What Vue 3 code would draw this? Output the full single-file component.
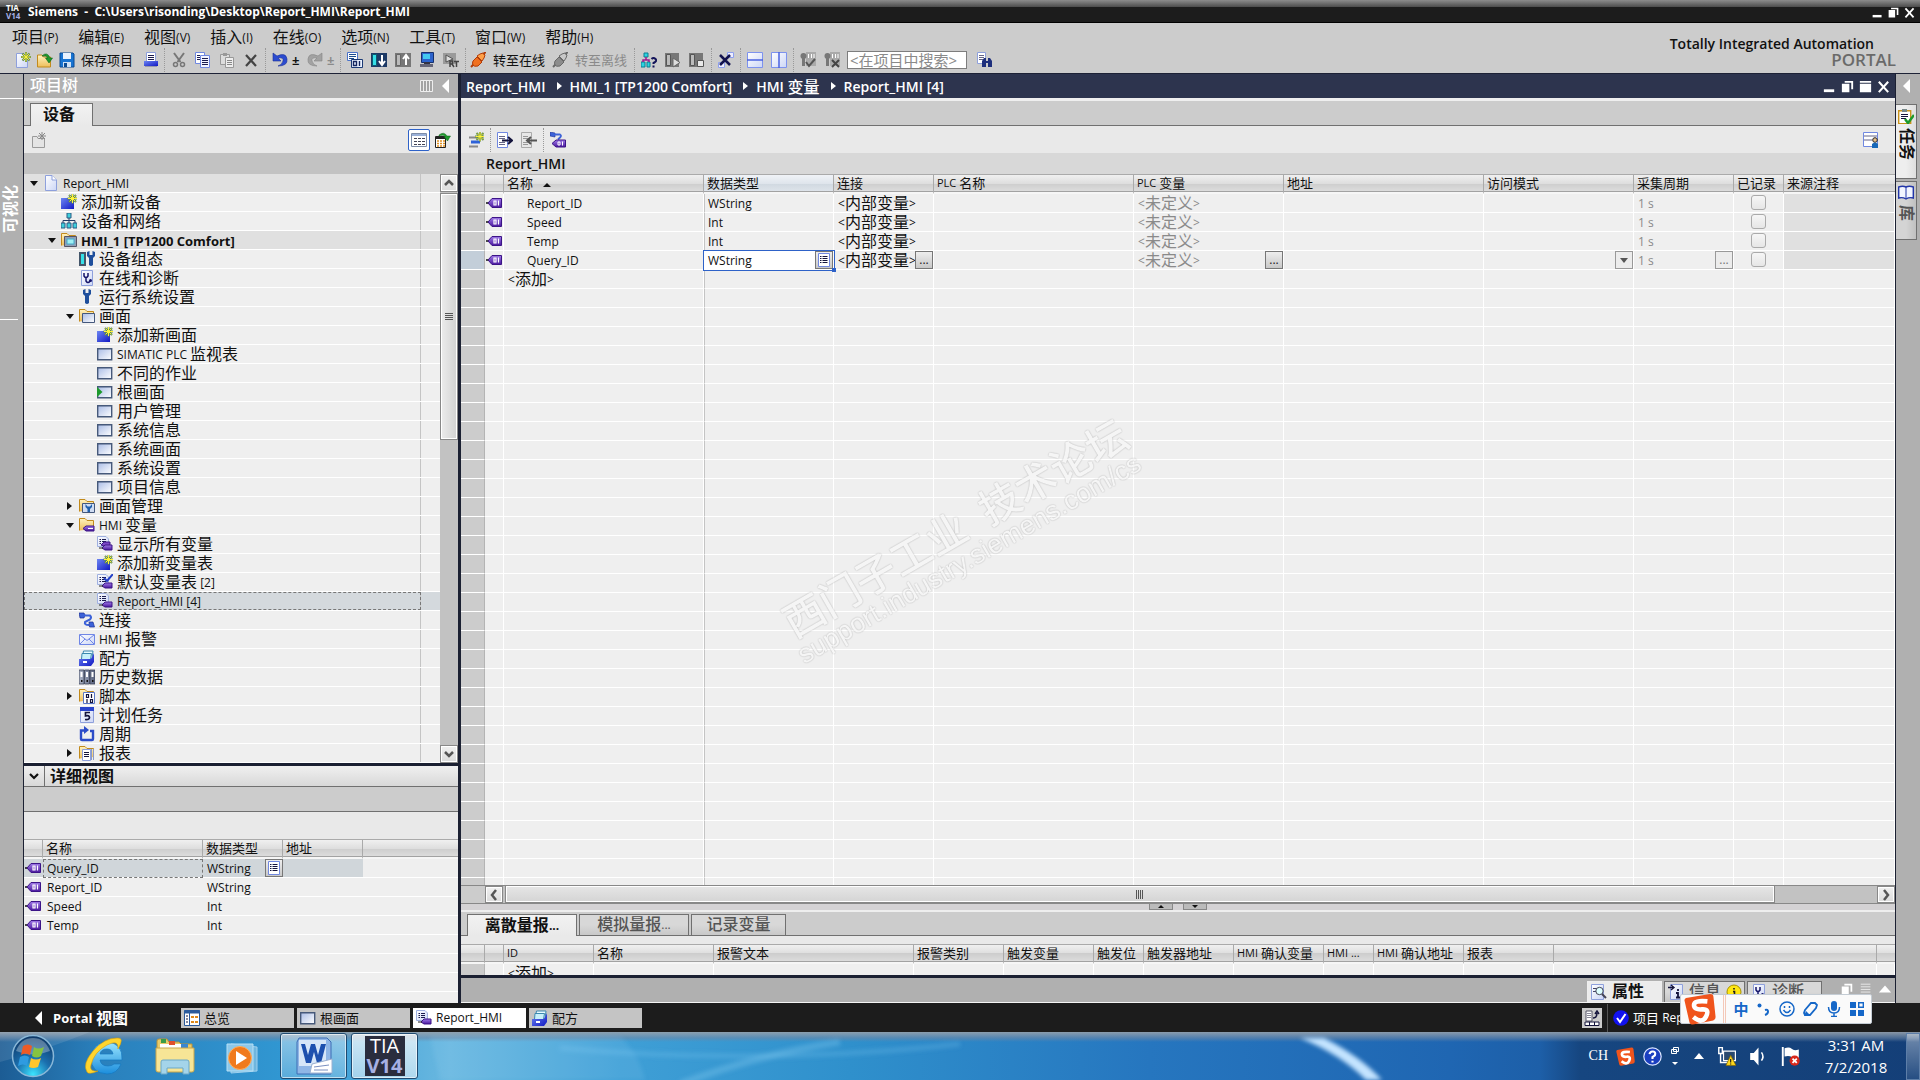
<script setup>
import { h } from 'vue'

/* Splits a label into Latin and Chinese runs so each keeps its own type size. */
const Txt = (props) =>
  h('span', { class: 'txt' },
    props.t.split(/([\u3400-\u9fff]+)/).filter(Boolean).map((run) =>
      /[\u3400-\u9fff]/.test(run) ? h('span', { class: 'zh' }, run) : run))
Txt.props = ['t']

const star = (x, y) =>
  `<g transform="translate(${x} ${y})" stroke-linecap="square"><path d="M0-4V4M-4 0H4M-2.8-2.8L2.8 2.8M-2.8 2.8L2.8-2.8" stroke="#5d8a4a" stroke-width="2"/><path d="M0-4V4M-4 0H4M-2.5-2.5L2.5 2.5M-2.5 2.5L2.5-2.5" stroke="#fff23a" stroke-width="1"/></g>`
const greyStar = (x, y) =>
  `<path transform="translate(${x} ${y})" d="M0-4V4M-4 0H4M-3-3L3 3M-3 3L3-3" stroke="#888" stroke-width="1"/>`
const folder = `<path d="M.5 13.5V1.500H6L8 3.500H14.500V12" fill="url(#gFolder)" stroke="#c28a1c"/>`
const miniTag = `<path d="M5 12l3-3h7v5H8z" fill="url(#gTag)" stroke="#3c1487"/><path d="M2 12h4" stroke="#222"/>`
const listPage = `<path d="M.5.500H9L11.500 3V10.500H.500z" fill="url(#gPage)" stroke="#9fb0e0"/><path d="M2.500 3.500h1.500M5 3.500h4M2.500 5.500h1.500M5 5.500h4M2.500 7.500h1.500M5 7.500h4" stroke="#1b1b4d"/>`
const wrench = (x, c) => `<path transform="translate(${x} 0)" d="M0 1v4l2 2v7q2 2 4 0V7l2-2V1L5.500 0v4h-3V0z" fill="${c}"/>`
const plug = (a, b, c) => `<path d="M1 15l3-3" stroke="${b}" stroke-width="2"/><path d="M3 9l4-4 5 5-4 4q-4 1-5-1t0-4z" fill="${a}" stroke="${b}"/><path d="M7 4l3-2 3-1 2 2-1 3-2 3z" fill="${c}" stroke="${b}"/><path d="M13 2l3-2" stroke="${b}" stroke-width="2"/>`

const icons = {
  newProject: `<path d="M1.500 1.500H9L12.500 5V15.500H1.500z" fill="url(#gPage)" stroke="#8ea0dc"/>${star(11, 5)}`,
  open: `<path d="M.5 15V3H5l1.500 2H13.500V15z" fill="url(#gFolder)" stroke="#c28a1c"/><path d="M5 4q5-5 8 2h2.500L12 11 8.500 6H11Q9 3 5 4z" fill="#1d9a2c" stroke="#0c6418" stroke-width=".6"/>`,
  save: `<path d="M1 1H14L15 2V15H1z" fill="#1874d2" stroke="#0b4b94"/><path d="M4 1h8v6H4z" fill="#e8f2ff"/><path d="M4 10h8v5H4z" fill="#cfe1f5"/><path d="M5 11h3v4H5z" fill="#0b4b94"/>`,
  print: `<path d="M3.500.500h9v9h-9z" fill="#fff" stroke="#8ea0dc"/><path d="M5 3.500h6M5 5.500h6M5 7.500h6" stroke="#1b1b4d"/><path d="M1 9h14v5H1z" fill="url(#gBlue)"/><path d="M2 14.500h12" stroke="#99a"/>`,
  cut: `<path d="M3 1l6.500 9M13 1L6.500 10" stroke="#777" stroke-width="2" fill="none"/><circle cx="4.500" cy="12.500" r="2" fill="none" stroke="#777" stroke-width="1.500"/><circle cx="11.500" cy="12.500" r="2" fill="none" stroke="#777" stroke-width="1.500"/>`,
  copy: `<path d="M.5.500h9v11h-9z" fill="#fff" stroke="#7088e0"/><path d="M2 3.500h3M2 5.500h3M2 7.500h3" stroke="#1b1b4d"/><path d="M5.500 3.500h9v12h-9z" fill="#f2f4ff" stroke="#7088e0"/><path d="M7 6.500h6M7 8.500h6M7 10.500h6M7 12.500h6" stroke="#1b1b4d"/>`,
  paste: `<path d="M1.500 2.500h9v10h-9z" fill="#ddd" stroke="#999"/><path d="M4 1h4v3H4z" fill="#999"/><path d="M6.500 5.500h8v10h-8z" fill="#eee" stroke="#999"/><path d="M8 8.500h5M8 10.500h5M8 12.500h5" stroke="#888"/>`,
  del: `<path d="M3 3l10 11M13 3L3 14" stroke="#444" stroke-width="2.200"/>`,
  undo: `<path d="M1 1v8h8L6 6q6-1 5 3t-5 5q10 0 9-7T5 4z" fill="#2b4bd0" stroke="#1a2f96" stroke-width=".6"/>`,
  redo: `<path d="M15 1v8H7l3-3Q4 5 5 9t5 5Q0 14 1 7t10-3z" fill="#a2a2a2" stroke="#858585" stroke-width=".6"/>`,
  compile: `<path d="M.5.500h10v8h-10z" fill="#fff" stroke="#4a72c8"/><path d="M2 2.500h7M2 4.500h7M2 6.500h5" stroke="#1b4b8d"/><path d="M4.500 7.500h11v8h-11z" fill="#eaf2ff" stroke="#1c3a74"/><path d="M6.500 9.500h3v4h-3zM12.500 9v5" stroke="#15265e" stroke-width="1.400" fill="none"/>`,
  download: `<path d="M0 1h16v14H0z" fill="#1d3a66"/><path d="M1.500 2.500h4v11h-4z" fill="#35e0e8" stroke="#0b5a70"/><path d="M11 3v9M8 9l3 4 3-4" stroke="#fff" stroke-width="2" fill="none"/>`,
  upload: `<path d="M0 1h16v14H0z" fill="#777"/><path d="M1.500 2.500h4v11h-4z" fill="#bbb" stroke="#666"/><path d="M11 13V4M8 7l3-4 3 4" stroke="#fff" stroke-width="2" fill="none"/>`,
  pc: `<path d="M2.500.500h12v10h-12z" fill="#2c63cc" stroke="#16316e"/><path d="M4 2h7v5H4z" fill="#43c9f0"/><path d="M1 12h13v3H1z" fill="#667"/><path d="M5 10h6v2H5z" fill="#334"/>`,
  rt: `<path d="M0 1h13v11H0z" fill="#9a9a9a"/><path d="M3 3l7 4-7 3z" fill="#ddd" stroke="#555"/><path d="M7 15V9h2.500v3H7M9 12l2 3M11 9.500h5M13.500 9v6" stroke="#444" stroke-width="1.500" fill="none"/>`,
  online: plug('#f07020', '#b23c08', '#ffa048'),
  offline: plug('#8c8c8c', '#686868', '#c8c8c8'),
  access: `<path d="M3 1h4v4H3zM0 10h4v5H0zM6 10h3v5H6z" fill="#2dd5e0" stroke="#0d7c92"/><path d="M5 5v3M2 10V8h6v2" stroke="#a01890" stroke-width="1.500" fill="none"/><path d="M10.500 7q2-2 4 0t-2 4v1M12.500 13.500v2" stroke="#14145a" stroke-width="2" fill="none"/>`,
  start: `<path d="M0 1h14v14H0z" fill="#777"/><path d="M1.500 2.500h4v11h-4z" fill="#bbb" stroke="#555"/><path d="M8 6l7 4.500L8 15z" fill="#ddd" stroke="#666"/>`,
  stop: `<path d="M0 1h14v14H0z" fill="#777"/><path d="M1.500 2.500h4v11h-4z" fill="#bbb" stroke="#555"/><path d="M8.500 8.500h6v6h-6z" fill="#e8e8e8" stroke="#555"/>`,
  cross: `<path d="M9.500.500h6v5h-6zM.5 10.500h6v5h-6z" fill="#eef" stroke="#8ea0ee"/><path d="M2 3l10 10M12 3L2 13" stroke="#12124e" stroke-width="2.500"/>`,
  splitH: `<path d="M.5.500h15v15H.500z" fill="url(#gPage)" stroke="#7d92ee"/><path d="M0 8h16" stroke="#4a62e0" stroke-width="1.500"/>`,
  splitV: `<path d="M.5.500h15v15H.500z" fill="url(#gPage)" stroke="#7d92ee"/><path d="M8 0v16" stroke="#4a62e0" stroke-width="1.500"/>`,
  refOk: `<path d="M6 0h10v14H6z" fill="#aaa"/><circle cx="3.500" cy="4" r="3" fill="#777"/><path d="M2 6h3v8H2z" fill="#777"/><path d="M8.500 2v4M11.500 2v4M14 2v4" stroke="#fff"/><path d="M6 10l3 4 6-7" stroke="#555" stroke-width="2" fill="none"/>`,
  refNo: `<path d="M6 0h10v14H6z" fill="#aaa"/><circle cx="3.500" cy="4" r="3" fill="#777"/><path d="M2 6h3v8H2z" fill="#777"/><path d="M8.500 2v4M11.500 2v4M14 2v4" stroke="#fff"/><path d="M8 8l7 7M15 8l-7 7" stroke="#444" stroke-width="2"/>`,
  find: `<path d="M.5.500h8v11h-8z" fill="#fff" stroke="#8ea0dc"/><path d="M2 3.500h5M2 5.500h5M2 7.500h5" stroke="#668"/><path d="M5 15V9l2-3h2v3h2V6h2l2 3v6h-4v-4H9v4z" fill="#1e2f7c"/>`,
  panel: `<path d="M1.500 2.500h12v11h-12z" fill="#a4a4a4" stroke="#eee"/><path d="M4.500 3v10M7.500 3v10M10.500 3v10" stroke="#eee"/>`,
  addGrey: `<path d="M1.500 4.500H6l1 2H13.500V15.500H1.500z" fill="#e4e4e4" stroke="#9a9a9a"/>${greyStar(11, 4)}`,
  grid: `<path d="M.5 1.500h15v13H.500z" fill="#fff" stroke="#7c8ca8"/><path d="M1 3h14" stroke="#9ab0d8" stroke-width="2"/><path d="M3 6.500h3M7 6.500h3M11 6.500h3M3 9.500h3M7 9.500h3M11 9.500h3M3 12.500h3M7 12.500h3M11 12.500h3" stroke="#445"/>`,
  gridGo: `<path d="M.5 4.500h10v11H.500z" fill="#fff" stroke="#222"/><path d="M1 6h9" stroke="#222" stroke-width="2"/><path d="M2 9h8M2 11.500h8M2 14h8" stroke="#e09020" stroke-dasharray="2 1" stroke-width="1.500"/><path d="M4 3q5-4 8 1h3.500L12.500 9 9 4.500h1.500Q8 2.500 4 4z" fill="#1d9a2c" stroke="#0c6418" stroke-width=".5"/>`,
  page: `<path d="M2.500.500H9L13.500 5V15.500h-11z" fill="url(#gPage)" stroke="#8ea0dc"/><path d="M9 .5V5h4.500" fill="#fff" stroke="#8ea0dc"/>`,
  add: `<path d="M0 4h13v11H0z" fill="url(#gBlue)"/>${star(11.5, 4.5)}`,
  network: `<path d="M6 0h4v5H6zM0 10h4v5H0zM6 10h4v5H6zM12 10h4v5h-4z" fill="#3ed0dc" stroke="#2b5a84"/><path d="M8 5v5M2 10V7.500h12V10" stroke="#223c66" fill="none"/>`,
  device: `${folder}<path d="M3.500 4.500h12v10h-12z" fill="#8ca0b8" stroke="#556"/><path d="M6 7h7v5H6z" fill="#9ff0f4" stroke="#4ac"/>`,
  config: `<path d="M0 1h7v14H0z" fill="#44566a"/><path d="M2 3h3v10H2z" fill="#35e0e8"/>${wrench(8, '#1f4f9c')}`,
  diag: `<path d="M2.500.500h11v15h-11z" fill="url(#gPage)" stroke="#8ea0dc"/><path d="M5 3v3q2 3 4 0V3M7 8v3q2 3 4 0" stroke="#14146a" stroke-width="1.500" fill="none"/><circle cx="11.500" cy="10.500" r="1.500" fill="#14146a"/>`,
  wrench: wrench(4, '#1f4f9c'),
  screens: `${folder}<path d="M3.500 5.500h12v9h-12z" fill="url(#gScreen)" stroke="#44587c"/>`,
  screen: `<path d="M.7 2.700h14v11H.700z" fill="url(#gScreen)" stroke="#46597a" stroke-width="1.400"/>`,
  rootScreen: `<path d="M.7 2.700h14v11H.700z" fill="url(#gScreen)" stroke="#46597a" stroke-width="1.400"/><path d="M0 3l5.500 5L0 13z" fill="#1d9a2c"/>`,
  screenMgmt: `${folder}<path d="M3.500 5.500h12v9h-12z" fill="#cfdcf2" stroke="#44587c"/><path d="M6.500 6v3l2 2v3h2.500v-3l2-2V6L11 8.500H8.500z" fill="#1f5fac"/>`,
  tagFolder: `${folder}<path d="M4 11.500l3-2.500h8v5H7z" fill="url(#gTag)" stroke="#3c1487"/><path d="M9 11.500h5" stroke="#fff"/>`,
  tagsAll: `${listPage}<path d="M4 9l3-3h6v4H7z" fill="#7c48c8" stroke="#3c1487"/>${miniTag}`,
  tagsDefault: `${listPage}<path d="M7 4l3 3 6-7" stroke="#2340c8" stroke-width="2" fill="none"/>${miniTag}`,
  tagTable: `${listPage}${miniTag}`,
  connection: `<path d="M0 1h5l1 2-1 3H1z" fill="#3c62d8" stroke="#1b2f96" stroke-width=".7"/><path d="M5 3.500h6q2 2 0 4L6 10q-1 3 4 3" stroke="#3c62d8" stroke-width="2" fill="none"/><path d="M10 10h4l1.500 5h-5z" fill="#3c62d8" stroke="#1b2f96" stroke-width=".7"/>`,
  mail: `<path d="M.5 3.500h15v10H.500z" fill="url(#gPage)" stroke="#6f86e6"/><path d="M1 4l7 5.500L15 4M1 13l5-5M15 13l-5-5" stroke="#6f86e6" fill="none"/>`,
  recipe: `<path d="M4.500 1H14l-1 8H3z" fill="#e8fbff" stroke="#3c88b0"/><path d="M3 3.500h9.500l-1 6h-9z" fill="#c8f0fa" stroke="#3c88b0"/><path d="M0 9h12l3-6v9l-3 4H0z" fill="url(#gBlue)"/><path d="M4 11h4v2H4z" fill="#fff"/>`,
  archive: `<path d="M0 1h5v14H0zM5.500 1h5v14h-5zM11 1h5v14h-5z" fill="url(#gBinder)" stroke="#3a4258" stroke-width=".8"/><path d="M1.500 3h2v5h-2zM7 3h2v5H7zM12.500 3h2v5h-2z" fill="#fff"/><path d="M2 11h1.500v2H2zM7.500 11H9v2H7.500zM13 11h1.500v2H13z" fill="#111"/>`,
  script: `${folder}<path d="M4.500 4.500h11v11h-11z" fill="#fff" stroke="#5a78c8"/><path d="M7.500 6.500h2v3h-2zM12.500 6v4M8 11v4M11.500 11.500h2v3h-2z" stroke="#14143c" fill="none" stroke-width="1.200"/>`,
  schedule: `<path d="M1.500.500h13v15h-13z" fill="url(#gPage)" stroke="#8ea0dc"/><path d="M1 0h14v4H1z" fill="#2a44cc"/><path d="M11 5.500H6.500v3.500q4-1 4 1.500t-4.500 2" stroke="#14143c" stroke-width="1.700" fill="none"/>`,
  cycle: `<path d="M5 4.500H2V13q0 1 1 1h10q1 0 1-1V5h-3" stroke="#2c4cc8" stroke-width="2.400" fill="none"/><path d="M5 0l5 4-5 4z" fill="#2c4cc8"/>`,
  report: `${folder}<path d="M3.500 4.500h8v11h-8z" fill="#fff" stroke="#8ea0dc"/><path d="M5 7.500h5M5 9.500h5M5 11.500h5" stroke="#14143c"/><path d="M12.500 4v11M14.500 4v11" stroke="#8a9ac8"/>`,
  tag: `<path d="M0 8h4" stroke="#111" stroke-width="1.500"/><path d="M2 8l4-4.500h9.500v9H6z" fill="url(#gTag)" stroke="#3c1487"/><path d="M8 6h2v4H8zM12.500 5.500v5" stroke="#fff" fill="none" stroke-width="1.200"/>`,
  list: `<path d="M2.500 1.500h11v13h-11z" fill="#fff" stroke="#7088e0"/><path d="M4 4.500h1.500M6.500 4.500h5M4 6.500h1.500M6.500 6.500h5M4 8.500h1.500M6.500 8.500h5M4 10.500h1.500M6.500 10.500h5" stroke="#14143c"/>`,
  addRow: `<path d="M1 5.500h9M1 14.500h9" stroke="#888" stroke-width="2"/><path d="M3 10h9" stroke="#2e62d8" stroke-width="3"/>${star(12, 4.5)}`,
  exportIcon: `<path d="M.5.500h10v15H.500z" fill="#fff" stroke="#7088e0"/><path d="M2 4.500h6M2 6.500h6M2 10.500h6M2 12.500h6" stroke="#668"/><path d="M5 8.500h9M11 5l4 3.500-4 3.500" stroke="#14143c" stroke-width="2" fill="none"/>`,
  importIcon: `<path d="M.5.500h10v15H.500z" fill="#e8e8e8" stroke="#aaa"/><path d="M2 4.500h5M2 6.500h5M2 10.500h5M2 12.500h5" stroke="#999"/><path d="M7 8.500h9M10 5L6 8.500l4 3.500" stroke="#555" stroke-width="2" fill="none"/>`,
  connTag: `<path d="M0 0l5 1v4L0 4z" fill="#3c62d8" stroke="#1b2f96" stroke-width=".6"/><path d="M4 2.500h6q2 1 0 3L8 7.500" stroke="#3c62d8" stroke-width="1.800" fill="none"/><path d="M2 11.500l4-3.500h9.500v7H6z" fill="url(#gTag)" stroke="#3c1487"/><path d="M8 10h2v3H8zM12.500 9.500v4" stroke="#fff" fill="none"/>`,
  person: `<path d="M.5.500h14v14H.500z" fill="#fff" stroke="#7088e0"/><path d="M1 4h13M1 8h8" stroke="#668"/><circle cx="12" cy="8" r="2.300" fill="#e8c08a" stroke="#222"/><path d="M9 16v-4q3-3 6 0v4z" fill="#1768b8"/>`,
  clipboard: `<path d="M.7 2.700h12v13H.700z" fill="#fff" stroke="#c8931c" stroke-width="1.400"/><path d="M4 1h5v3H4z" fill="#788"/><path d="M3 6.500h7M3 8.500h7M3 10.500h5" stroke="#14143c"/><path d="M7 11l3 4 6-8" stroke="#1d9a2c" stroke-width="2.500" fill="none"/>`,
  book: `<path d="M.7 2q4-1.500 7.300 0 3.300-1.500 7.300 0v11q-4-1-7.300 1-3.300-2-7.300-1z" fill="#f2f5ff" stroke="#2236a8" stroke-width="1.400"/><path d="M8 2v12" stroke="#2236a8"/>`,
  overview: `<path d="M.5.500h15v15H.500z" fill="#fff" stroke="#2a5a9c"/><path d="M0 2h16" stroke="#2a5a9c" stroke-width="3"/><path d="M5.500 3v12" stroke="#2a5a9c"/><path d="M2 6h2M2 9h2M2 12h2" stroke="#14143c"/><path d="M7 7h3M11 7h3M7 12h3M11 12h3" stroke="#e08a1c" stroke-width="2"/>`,
  search: `<path d="M.5.500h12v15H.500z" fill="url(#gPage)" stroke="#8ea0dc"/><path d="M2 4.500h4M2 7.500h3" stroke="#446"/><circle cx="8.500" cy="7" r="3.700" fill="#dff" stroke="#445"/><path d="M11 10l4 4" stroke="#445" stroke-width="2"/>`,
  info: `<path d="M2.500.500h12v15h-12z" fill="url(#gPage)" stroke="#8ea0dc"/><path d="M0 3.500h5M3 1l3 2.500L3 6" stroke="#14143c" stroke-width="1.400" fill="none"/><path d="M10 5v2M8 9h2v4M8 13.500h4" stroke="#14143c" stroke-width="1.800" fill="none"/>`,
  badge: `<circle cx="8" cy="8" r="7" fill="#ffe712" stroke="#a89200"/><path d="M8 4v1.500M7 7.500h1.500V12M6.500 12h4" stroke="#222" stroke-width="1.600" fill="none"/>`,
  sync: `<path d="M2 1h6v10H2z" fill="#fff" stroke="#556"/><path d="M3 3.500h4M3 5.500h4M3 7.500h4" stroke="#889"/><path d="M9 8q4 0 4-5M11 4l2-3 2 3" stroke="#14143c" stroke-width="1.500" fill="none"/><path d="M1 12h14v3.500H1z" fill="#fff" stroke="#14143c"/><path d="M5.500 12v3M10.500 12v3" stroke="#14143c"/>`,
  ok: `<circle cx="8" cy="8" r="7.800" fill="#1212f0"/><path d="M4 8l3 4 5.500-8" stroke="#fff" stroke-width="2" fill="none"/>`,
  sogou: `<path d="M1 2.500L13 .500q1.500 0 1.700 1.200L15.800 12q0 1.500-1.200 1.800L4.500 15.800q-1.500 0-1.800-1.300L.300 4Q0 3 1 2.500z" fill="#f0541c"/><path d="M11.700 4.200Q5 3.500 5 6t4 2.200 2 3.600-6.300.2" stroke="#fff" stroke-width="2.300" fill="none"/>`,
  help: `<circle cx="8" cy="8" r="7.300" fill="#1b3fc0" stroke="#dfe8ff"/><path d="M5.500 6q.5-2.500 3-2.200T10 7L8 8.500V10M8 11.500v1.500" stroke="#fff" stroke-width="1.800" fill="none"/>`,
  smile: `<circle cx="8" cy="8" r="7" fill="none" stroke="#1567c8" stroke-width="1.500"/><path d="M5.500 5v2M10.500 5v2M4.500 9q3.500 5 7 0" stroke="#1567c8" stroke-width="1.500" fill="none"/>`,
  pen: `<path d="M3 9l6-7h4l2 2-1 3-6 7H3l-1-2z" fill="none" stroke="#1567c8" stroke-width="1.800"/><path d="M2 15l2-5 3 3z" fill="#1567c8"/>`,
  mic: `<rect x="5" y="0" width="6" height="10" rx="3" fill="#1567c8"/><path d="M2.500 6q0 6 5.500 6t5.500-6M8 12v3.500M5 15.500h6" stroke="#1567c8" stroke-width="1.500" fill="none"/>`,
  apps: `<path d="M1 1h6v6H1zM1 9h6v6H1zM9 9h6v6H9z" fill="#1567c8"/><path d="M9.700 1.700h4.600v4.600H9.700z" fill="none" stroke="#1567c8" stroke-width="1.400"/>`,
  comma: `<circle cx="3.500" cy="4.500" r="2" fill="#1567c8"/><path d="M9 9q3-1 3 1.500T9 14" stroke="#1567c8" stroke-width="2" fill="none"/>`,
  net: `<path d="M5.500 3.500h10v8h-10z" fill="#2a4a70" stroke="#fff"/><path d="M1.500.500h3v5h-3zM3 6v7h6" stroke="#fff" fill="none" stroke-width="1.200"/><path d="M11.500 7l4.500 8.500H7.500z" fill="#ffd81c" stroke="#806400" stroke-width=".6"/><path d="M11.500 10v3M11.500 13.800v1" stroke="#222"/>`,
  sound: `<path d="M1 5h3l4-4.500v15L4 11H1z" fill="#fff"/><path d="M10.500 4.500q2.500 3.500 0 7" stroke="#fff" fill="none" stroke-width="1.300"/>`,
  flag: `<path d="M1.500 0v16" stroke="#fff" stroke-width="1.600"/><path d="M3 1q4-1.500 6 .5t6 .5v7q-4 1-6-.5T3 8z" fill="#fff"/><circle cx="11.500" cy="11.500" r="4.300" fill="#d8281c"/><path d="M9.700 9.700l3.600 3.600M13.300 9.700l-3.600 3.600" stroke="#fff" stroke-width="1.500"/>`,
  min: `<path d="M2 11h11v3H2z" fill="#fff"/>`,
  restore: `<path d="M5 2h9v9h-2V4H5zM2 5h8v9H2z" fill="#fff"/>`,
  max: `<path d="M2 2h12v2H2zM2 5h12v9H2z" fill="#fff"/>`,
  close: `<path d="M3 3l10 11M13 3L3 14" stroke="#fff" stroke-width="2.200"/>`,
  lines: `<path d="M2 2.500h11M2 5.500h11M2 8.500h11M2 11.500h11" stroke="#eee"/>`,
  triLeft: `<path d="M11 1v14L4 8z" fill="#fff"/>`,
  triUp: `<path d="M1 12L8 4l7 8z" fill="#fff"/>`,
}

const Ico = (props) =>
  h('svg', { class: 'ico', viewBox: '0 0 16 16', fill: 'none', 'aria-hidden': 'true', innerHTML: icons[props.n] })
Ico.props = ['n']

const menus = ['项目(P)', '编辑(E)', '视图(V)', '插入(I)', '在线(O)', '选项(N)', '工具(T)', '窗口(W)', '帮助(H)']

const tools = [
  { n: 'newProject', k: 'near' }, { n: 'open', k: 'near' }, { n: 'save', t: '保存项目', k: 'save' }, { n: 'print', k: 'near' }, { sep: 1 },
  { n: 'cut' }, { n: 'copy' }, { n: 'paste' }, { n: 'del' }, { sep: 1 },
  { n: 'undo' }, { pm: 1 }, { n: 'redo' }, { pm: 1, off: true }, { sep: 1 },
  { n: 'compile' }, { n: 'download' }, { n: 'upload' }, { n: 'pc' }, { n: 'rt' }, { sep: 1 },
  { n: 'online', t: '转至在线', k: 'link' }, { n: 'offline', t: '转至离线', k: 'link', off: true }, { sep: 1 },
  { n: 'access' }, { n: 'start' }, { n: 'stop' }, { sep: 1 },
  { n: 'cross' }, { sep: 1 }, { n: 'splitH' }, { n: 'splitV' }, { sep: 1 }, { n: 'refOk' }, { n: 'refNo' },
]

const tree = [
  { l: 0, i: 'page', t: 'Report_HMI', a: 'open', hl: true },
  { l: 1, i: 'add', t: '添加新设备' },
  { l: 1, i: 'network', t: '设备和网络' },
  { l: 1, i: 'device', t: 'HMI_1 [TP1200 Comfort]', a: 'open', hl: true, b: true },
  { l: 2, i: 'config', t: '设备组态' },
  { l: 2, i: 'diag', t: '在线和诊断' },
  { l: 2, i: 'wrench', t: '运行系统设置' },
  { l: 2, i: 'screens', t: '画面', a: 'open' },
  { l: 3, i: 'add', t: '添加新画面' },
  { l: 3, i: 'screen', t: 'SIMATIC PLC 监视表' },
  { l: 3, i: 'screen', t: '不同的作业' },
  { l: 3, i: 'rootScreen', t: '根画面' },
  { l: 3, i: 'screen', t: '用户管理' },
  { l: 3, i: 'screen', t: '系统信息' },
  { l: 3, i: 'screen', t: '系统画面' },
  { l: 3, i: 'screen', t: '系统设置' },
  { l: 3, i: 'screen', t: '项目信息' },
  { l: 2, i: 'screenMgmt', t: '画面管理', a: 'shut' },
  { l: 2, i: 'tagFolder', t: 'HMI 变量', a: 'open' },
  { l: 3, i: 'tagsAll', t: '显示所有变量' },
  { l: 3, i: 'add', t: '添加新变量表' },
  { l: 3, i: 'tagsDefault', t: '默认变量表 [2]' },
  { l: 3, i: 'tagTable', t: 'Report_HMI [4]', sel: true },
  { l: 2, i: 'connection', t: '连接' },
  { l: 2, i: 'mail', t: 'HMI 报警' },
  { l: 2, i: 'recipe', t: '配方' },
  { l: 2, i: 'archive', t: '历史数据' },
  { l: 2, i: 'script', t: '脚本', a: 'shut' },
  { l: 2, i: 'schedule', t: '计划任务' },
  { l: 2, i: 'cycle', t: '周期' },
  { l: 2, i: 'report', t: '报表', a: 'shut' },
]

const details = [
  { n: 'Query_ID', t: 'WString', sel: true },
  { n: 'Report_ID', t: 'WString' },
  { n: 'Speed', t: 'Int' },
  { n: 'Temp', t: 'Int' },
]

const crumbs = ['Report_HMI', 'HMI_1 [TP1200 Comfort]', 'HMI 变量', 'Report_HMI [4]']
const columns = ['名称', '数据类型', '连接', 'PLC 名称', 'PLC 变量', '地址', '访问模式', '采集周期', '已记录', '来源注释']
const columnWidths = [24, 19, 200, 130, 100, 200, 150, 200, 150, 100, 50, 0]
const tags = [
  { n: 'Report_ID', t: 'WString' },
  { n: 'Speed', t: 'Int' },
  { n: 'Temp', t: 'Int' },
  { n: 'Query_ID', t: 'WString', sel: true },
]
const alarmTabs = ['离散量报...', '模拟量报...', '记录变量']
const alarmColumns = ['', '', 'ID', '名称', '报警文本', '报警类别', '触发变量', '触发位', '触发器地址', 'HMI 确认变量', 'HMI ...', 'HMI 确认地址', '报表', '', '']
const alarmWidths = [24, 19, 90, 120, 200, 90, 90, 50, 90, 90, 50, 90, 90, 0, 18]
const editors = [
  { i: 'overview', t: '总览' },
  { i: 'screen', t: '根画面' },
  { i: 'tagTable', t: 'Report_HMI', on: true },
  { i: 'recipe', t: '配方' },
]
const px = (n) => (n ? { width: n + 'px' } : {})
</script>

<template>
  <div class="desktop">
    <svg class="defs" aria-hidden="true">
      <defs>
        <linearGradient id="gPage" x1="0" y1="0" x2="1" y2="1"><stop offset="0" stop-color="#fff" /><stop offset="1" stop-color="#ccd6f6" /></linearGradient>
        <linearGradient id="gFolder" x1="0" y1="0" x2="0" y2="1"><stop offset="0" stop-color="#fff3c0" /><stop offset="1" stop-color="#eebe5a" /></linearGradient>
        <linearGradient id="gBlue" x1="0" y1="0" x2="1" y2="1"><stop offset="0" stop-color="#6d86f2" /><stop offset="1" stop-color="#1219c4" /></linearGradient>
        <linearGradient id="gTag" x1="0" y1="0" x2="0" y2="1"><stop offset="0" stop-color="#a07ae8" /><stop offset="1" stop-color="#4a189e" /></linearGradient>
        <linearGradient id="gScreen" x1="0" y1="0" x2="1" y2="1"><stop offset="0" stop-color="#a9bce6" /><stop offset="1" stop-color="#fff" /></linearGradient>
        <linearGradient id="gBinder" x1="0" y1="0" x2="1" y2="0"><stop offset="0" stop-color="#aab2c4" /><stop offset="1" stop-color="#5a6480" /></linearGradient>
      </defs>
    </svg>

    <header class="titlebar">
      <div class="logo"><b>TIA</b><b class="ver">V14</b></div>
      <h1>Siemens&nbsp; -&nbsp; C:\Users\risonding\Desktop\Report_HMI\Report_HMI</h1>
      <div class="wincontrols">
        <button aria-label="最小化"><Ico n="min" /></button>
        <button aria-label="还原"><Ico n="restore" /></button>
        <button aria-label="关闭"><Ico n="close" /></button>
      </div>
    </header>

    <div class="ribbon">
      <div class="bars">
        <nav class="menus"><button v-for="m in menus" :key="m"><Txt :t="m" /></button></nav>
        <div class="tools">
          <template v-for="(b, i) in tools" :key="i">
            <i v-if="b.sep" class="sep"></i>
            <button v-else-if="b.pm" class="pm" :class="{ off: b.off }">±</button>
            <button v-else :class="[b.k, { off: b.off }]" :aria-label="b.n"><Ico :n="b.n" /><Txt v-if="b.t" :t="b.t" /></button>
          </template>
          <input class="search" type="text" placeholder="<在项目中搜索>" aria-label="在项目中搜索" />
          <button class="findbtn" aria-label="搜索"><Ico n="find" /></button>
        </div>
      </div>
      <div class="brand"><div class="tia">Totally Integrated Automation</div><div class="portal">PORTAL</div></div>
    </div>

    <main class="work">
      <aside class="strip left"><div class="cap"></div><div class="vtext"><Txt t="可视化" /></div></aside>

      <section class="project">
        <div class="phead"><Txt t="项目树" /><span class="grow"></span><Ico n="panel" /><Ico n="triLeft" /></div>
        <div class="tabband"><button class="tab on"><Txt t="设备" /></button></div>
        <div class="ptools">
          <button aria-label="新增"><Ico n="addGrey" /></button><span class="grow"></span>
          <button class="framed" aria-label="列表"><Ico n="grid" /></button><button aria-label="导出"><Ico n="gridGo" /></button>
        </div>
        <div class="pband"></div>
        <div class="treewrap">
          <ul class="tree">
            <li v-for="(r, i) in tree" :key="i" :class="{ hl: r.hl, sel: r.sel }">
              <div class="node" :class="'l' + r.l">
                <span class="arrow" :class="r.a"></span><Ico :n="r.i" /><Txt :t="r.t" :class="{ bold: r.b }" />
              </div>
              <div class="side"></div>
            </li>
          </ul>
          <div class="vscroll">
            <button class="sbtn" aria-label="上"><svg viewBox="0 0 12 12" fill="none"><path d="M2 8l4-4 4 4" stroke="#555" stroke-width="2.500" /></svg></button>
            <div class="vthumb"><i class="grip"></i></div>
            <span class="grow"></span>
            <button class="sbtn" aria-label="下"><svg viewBox="0 0 12 12" fill="none"><path d="M2 4l4 4 4-4" stroke="#555" stroke-width="2.500" /></svg></button>
          </div>
        </div>
        <div class="dhead">
          <button aria-label="折叠"><svg viewBox="0 0 12 12" fill="none"><path d="M2 4l4 4 4-4" stroke="#111" stroke-width="2.200" /></svg></button>
          <h2><Txt t="详细视图" /></h2>
        </div>
        <div class="dband"></div>
        <div class="dtools"></div>
        <div class="dgrid">
          <table>
            <colgroup><col style="width:19px" /><col style="width:160px" /><col style="width:80px" /><col style="width:80px" /><col /></colgroup>
            <thead><tr><th></th><th><Txt t="名称" /></th><th><Txt t="数据类型" /></th><th><Txt t="地址" /></th><th></th></tr></thead>
            <tbody>
              <tr v-for="d in details" :key="d.n" :class="{ sel: d.sel }">
                <td class="ic"><Ico n="tag" /></td><td class="dn">{{ d.n }}</td>
                <td class="has"><div class="cell">{{ d.t }}<button v-if="d.sel" class="cbtn" aria-label="列表"><Ico n="list" /></button></div></td><td></td><td></td>
              </tr>
              <tr v-for="k in 4" :key="k"><td></td><td></td><td></td><td></td><td></td></tr>
            </tbody>
          </table>
        </div>
      </section>

      <section class="editor">
        <div class="path">
          <template v-for="(c, i) in crumbs" :key="i"><i v-if="i" class="chev"></i><a href="#"><Txt :t="c" /></a></template>
          <span class="grow"></span>
          <button aria-label="最小化"><Ico n="min" /></button><button aria-label="还原"><Ico n="restore" /></button>
          <button aria-label="最大化"><Ico n="max" /></button><button aria-label="关闭"><Ico n="close" /></button>
        </div>
        <div class="tabband"></div>
        <div class="etools">
          <button aria-label="添加"><Ico n="addRow" /></button><i class="sep"></i>
          <button aria-label="导出"><Ico n="exportIcon" /></button><button aria-label="导入"><Ico n="importIcon" /></button><i class="sep"></i>
          <button aria-label="连接"><Ico n="connTag" /></button><span class="grow"></span>
          <button aria-label="用户"><Ico n="person" /></button>
        </div>
        <h2 class="gtitle">Report_HMI</h2>
        <div class="maingrid">
          <table>
            <colgroup><col v-for="(w, i) in columnWidths" :key="i" :style="px(w)" /></colgroup>
            <thead><tr><th></th><th></th><th v-for="(c, i) in columns" :key="c" :class="{ hot: i === 1 }"><Txt :t="c" /><i v-if="!i" class="sort"></i></th></tr></thead>
            <tbody>
              <tr v-for="r in tags" :key="r.n" :class="{ sel: r.sel }">
                <td class="gut"></td><td class="ic"><Ico n="tag" /></td><td class="name">{{ r.n }}</td>
                <td class="type has"><div class="cell">{{ r.t }}<button v-if="r.sel" class="cbtn" aria-label="列表"><Ico n="list" /></button></div></td>
                <td class="has"><div class="cell"><Txt t="<内部变量>" /><button v-if="r.sel" class="cbtn dots">...</button></div></td>
                <td></td>
                <td class="dim has"><div class="cell"><Txt t="<未定义>" /><button v-if="r.sel" class="cbtn dots">...</button></div></td>
                <td></td>
                <td class="has"><div class="cell"><button v-if="r.sel" class="cbtn pale" aria-label="展开"><i class="down"></i></button></div></td>
                <td class="dim has"><div class="cell">1 s<button v-if="r.sel" class="cbtn dots pale">...</button></div></td>
                <td class="chk has"><input type="checkbox" disabled aria-label="已记录" /></td>
                <td class="shade"></td>
              </tr>
              <tr v-for="k in 33" :key="k">
                <td class="gut"></td><td></td><td><Txt v-if="k === 1" t="<添加>" /></td><td class="type"></td>
                <td v-for="j in 8" :key="j"></td>
              </tr>
            </tbody>
          </table>
        </div>
        <div class="hscroll">
          <div class="hgut"></div>
          <button class="sbtn" aria-label="左"><svg viewBox="0 0 12 12" fill="none"><path d="M8 1L4 6l4 5" stroke="#555" stroke-width="2.500" /></svg></button>
          <div class="hthumb"><i class="grip v"></i></div><div class="htrack"></div>
          <button class="sbtn" aria-label="右"><svg viewBox="0 0 12 12" fill="none"><path d="M4 1l4 5-4 5" stroke="#555" stroke-width="2.500" /></svg></button>
        </div>
        <div class="hsplit"><button aria-label="上移"><i class="up"></i></button><button aria-label="下移"><i class="down"></i></button></div>
        <div class="atabs"><button v-for="(t, i) in alarmTabs" :key="t" class="tab" :class="{ on: !i }"><Txt :t="t" /></button></div>
        <div class="agap"></div>
        <div class="agrid">
          <table>
            <colgroup><col v-for="(w, i) in alarmWidths" :key="i" :style="px(w)" /></colgroup>
            <thead><tr><th v-for="(c, i) in alarmColumns" :key="i"><Txt :t="c" /></th></tr></thead>
            <tbody><tr><td class="gut"></td><td></td><td><Txt t="<添加>" /></td><td v-for="j in 12" :key="j"></td></tr></tbody>
          </table>
        </div>
        <div class="inspector">
          <button class="itab on"><Ico n="search" /><Txt t="属性" /></button>
          <button class="itab"><Ico n="info" /><Txt t="信息" /><Ico n="badge" /></button>
          <button class="itab"><Ico n="diag" /><Txt t="诊断" /></button>
          <div class="ictl"><Ico n="restore" /><Ico n="lines" /><Ico n="triUp" /></div>
        </div>
      </section>

      <aside class="strip right">
        <div class="cap"><Ico n="triLeft" /></div>
        <button class="vtab on"><Ico n="clipboard" /><span class="vt"><Txt t="任务" /></span></button>
        <button class="vtab short"><Ico n="book" /><span class="vt"><Txt t="库" /></span></button>
      </aside>
    </main>

    <footer class="status">
      <button class="portalbtn"><Ico n="triLeft" /><Txt t="Portal 视图" /></button>
      <div class="edtabs"><button v-for="e in editors" :key="e.t" :class="{ on: e.on }"><Ico :n="e.i" /><Txt :t="e.t" /></button></div>
      <div class="msg"><span class="box"><Ico n="sync" /></span><span class="bar"></span><Ico n="ok" /><Txt t="项目 Report_HMI" /></div>
      <div class="ime">
        <Ico n="sogou" class="big" /><i class="imesep"></i><b>中</b><Ico n="comma" /><Ico n="smile" /><Ico n="pen" /><Ico n="mic" /><Ico n="apps" />
      </div>
    </footer>

    <footer class="taskbar">
      <svg class="aero" viewBox="0 0 1920 48" preserveAspectRatio="none" fill="none" aria-hidden="true">
        <defs><filter id="soft" x="-10%" y="-10%" width="120%" height="120%"><feGaussianBlur stdDeviation="2" /></filter></defs>
        <path d="M0 0H90Q40 20 0 30z" fill="#fff" opacity=".1" />
        <g filter="url(#soft)">
          <path d="M560 16Q760 34 960 12" stroke="#8fd0f4" stroke-width="5" opacity=".22" />
          <path d="M680 52Q760 22 840 10" stroke="#8fd0f4" stroke-width="7" opacity=".3" />
          <path d="M430 4H620Q640 24 645 48H440z" fill="#9fdcf8" opacity=".13" />
          <path d="M1300 6H1324Q1360 24 1382 48H1366Q1340 22 1300 6z" fill="#c4e4ff" />
        </g>
      </svg>
      <button class="orb" aria-label="开始">
        <svg viewBox="0 0 44 44"><defs><radialGradient id="gOrb" cx=".5" cy=".95" r=".95"><stop offset="0" stop-color="#3be4ff" /><stop offset=".45" stop-color="#1b6fae" /><stop offset="1" stop-color="#0d3563" /></radialGradient></defs><circle cx="22" cy="22" r="20.500" fill="url(#gOrb)" stroke="#8ab8d8" stroke-width="1.500" /><path d="M5 17Q10 4 22 4t17 13Q22 24 5 17z" fill="#fff" opacity=".3" /><path d="M12 12q5-3 9 0l-2 9q-5-3-9 0z" fill="#ee5a24" /><path d="M23 13q4 3 10 0l-3 9q-4 3-9 0z" fill="#86c440" /><path d="M9 23q5-3 9 0l-2 9q-4-3-9 0z" fill="#2f9be0" /><path d="M20 24q5 3 10 0l-3 9q-5 2-9 0z" fill="#ffc62c" /></svg>
      </button>
      <button class="app" aria-label="浏览器">
        <svg viewBox="0 0 40 40"><defs><linearGradient id="gIe" x1="0" y1="0" x2="0" y2="1"><stop offset="0" stop-color="#9be6ff" /><stop offset="1" stop-color="#1b8ddc" /></linearGradient></defs><path d="M37 24H15q1 6 8 6 4 0 6-2h7q-4 10-14 10Q6 37 6 22 8 7 22 6q16 1 15 18zM15 18h13q-1-5-6-5-6 0-7 5z" fill="url(#gIe)" stroke="#1678c0" stroke-width=".7" /><path d="M33 13q7-12-1-11Q19 2 8 15T2 36q2 3 11-1-9 1-7-6 3-13 16-20 12-6 11 4z" fill="#ffd52e" stroke="#d89c08" stroke-width=".6" /></svg>
      </button>
      <button class="app" aria-label="资源管理器">
        <svg viewBox="0 0 40 40"><path d="M2 35V5q0-2 2-2h8l2 3h10l2 2h11v27z" fill="#e8cc6a" stroke="#b8923a" /><path d="M5 8h28v5H5z" fill="#fff" /><path d="M6 3h5v4H6z" fill="#3a9c48" /><path d="M14 5h6v4h-6z" fill="#e0502c" /><path d="M26 8h7v4h-7z" fill="#3a86d0" /><path d="M1 12h38v22q0 2-2 2H3q-2 0-2-2z" fill="#f7e596" stroke="#c9a64a" /><path d="M6 38V26q0-2 2-2h24q2 0 2 2v12h-6v-6H12v6z" fill="#a4d4ea" stroke="#6aa8c8" /></svg>
      </button>
      <button class="app media" aria-label="播放器">
        <svg viewBox="0 0 40 40"><path d="M8 8l26 3v24L8 37z" fill="#6fb6de" stroke="#9fd0ee" /><path d="M4 8h26v27H4z" fill="#8cc8ea" stroke="#b6e0f6" /><circle cx="17" cy="22" r="11.500" fill="#f07a1c" stroke="#ffb060" /><path d="M13 15l11 7-11 7z" fill="#fff" /></svg>
      </button>
      <button class="app run" aria-label="文字处理">
        <svg viewBox="0 0 40 40"><path d="M5 2h28l4 4v32H3V6z" fill="#8fb6e6" stroke="#3c6cb4" /><path d="M5 4h27v26H5z" fill="#d6e6f8" /><path d="M7 8l5 19h5l3-11 3 11h4L32 8h-5l-3 11-3-11h-4l-3 11-3-11z" fill="#1d50ae" /><path d="M18 28l20-5v14H16z" fill="#fff" stroke="#9ab0d0" /><path d="M20 31l15-2M20 34h14" stroke="#7a90c0" /></svg>
      </button>
      <button class="app run tiabtn"><span class="tiabox"><b>TIA</b><b class="ver">V14</b></span></button>
      <div class="lang">
        <span class="ch">CH</span><Ico n="sogou" class="mid" /><Ico n="help" class="mid" />
        <span class="mini"><svg viewBox="0 0 10 20" fill="none"><path d="M3.500 1.500h5v4h-5zM1.500 3.500h5v4h-5z" stroke="#fff" fill="#1c4a80" /><path d="M2 16h6l-3 3z" fill="#fff" /></svg></span>
      </div>
      <div class="tray">
        <span class="mini"><svg viewBox="0 0 10 20"><path d="M0 13l5-6 5 6z" fill="#fff" /></svg></span>
        <Ico n="net" class="mid" /><Ico n="sound" class="mid" /><Ico n="flag" class="mid" />
      </div>
      <div class="clock"><div>3:31 AM</div><div>7/2/2018</div></div>
      <button class="peek" aria-label="显示桌面"></button>
    </footer>

    <div class="watermark"><div class="wm"><div class="wm1">西门子工业&ensp;技术论坛</div><div class="wm2">support.industry.siemens.com/cs</div></div></div>
  </div>
</template>

<style>
html, body { margin: 0; height: 100%; }
body { overflow: hidden; }
.txt .zh { font-family: "Noto Sans CJK SC", sans-serif; font-size: var(--zh); line-height: 0; vertical-align: -1px; }
.txt { white-space: pre; }
.ico { width: 16px; height: 16px; flex: none; display: block; }
</style>

<style scoped>
.desktop { --zh: 16px; position: relative; height: 100vh; display: flex; flex-direction: column; overflow: hidden; font: 12px/18px "Open Sans", "Noto Sans CJK SC", sans-serif; color: #111; background: #b0b0b0; }
.desktop * { box-sizing: border-box; }
.defs { position: absolute; width: 0; height: 0; }
button { border: 0; padding: 0; margin: 0; background: none; font: inherit; color: inherit; display: flex; align-items: center; flex: none; }
h1, h2 { margin: 0; font: inherit; }
a { color: inherit; text-decoration: none; }
.grow { flex: 1; }

.titlebar { flex: none; height: 23px; display: flex; align-items: center; background: linear-gradient(#8c8c8c 0, #4c4c4c 7px, #1c1c1c 7px, #1c1c1c 22px, #000 22px); color: #fff; padding: 1px 4px 0 6px; }
.logo { width: 22px; display: flex; flex-direction: column; font-size: 8px; line-height: 8px; }
.ver { color: #a6b0e4; }
.titlebar h1 { font-size: 12px; font-weight: 700; flex: 1; }
.wincontrols { display: flex; gap: 3px; }
.wincontrols .ico { width: 13px; height: 13px; }

.ribbon { flex: none; height: 51px; display: flex; justify-content: space-between; background: #ccc; border-bottom: 1px solid #1d2236; }
.menus { display: flex; gap: 20px; padding-left: 12px; height: 26px; padding-top: 4px; }
.tools { --zh: 13px; display: flex; align-items: center; height: 22px; padding-left: 12px; }
.tools button { width: 24px; height: 20px; justify-content: center; }
.tools button.near { width: 22px; }
.tools button.save { width: 84px; justify-content: flex-start; gap: 6px; padding-left: 3px; }
.tools button.link { width: 82px; justify-content: flex-start; gap: 7px; padding-left: 2px; }
.tools button.pm { width: 11px; justify-content: flex-start; font-size: 13px; font-weight: 700; }
.tools .off { color: #8a8a8a; }
.sep { flex: none; width: 1px; height: 24px; margin: 0 2px; border-left: 1px dotted #999; }
.search { width: 120px; height: 18px; margin-left: 3px; padding: 0 2px; border: 1px solid #7d7d7d; background: #fff; font: 15px/16px "Open Sans", "Noto Sans CJK SC", sans-serif; }
.search::placeholder { color: #8a8a8a; opacity: 1; }
.tools .findbtn { margin-left: 6px; }
.brand { padding: 12px 24px 0 0; text-align: right; }
.tia { font-size: 14px; font-weight: 600; line-height: 18px; padding-right: 22px; }
.portal { font-size: 17px; font-weight: 600; line-height: 13px; color: #6a6a6a; }

.work { flex: 1; min-height: 0; display: flex; }
.strip { flex: none; width: 24px; background: #b0b0b0; color: #fff; }
.strip.left { border-right: 1px solid #1b2032; }
.strip .cap { height: 25px; border-bottom: 1px solid #fff; }
.strip.right .cap { height: 30px; border: 0; padding: 4px 3px; }
.vtext { height: 221px; display: flex; align-items: center; justify-content: center; writing-mode: vertical-rl; text-orientation: sideways; transform: rotate(180deg); border-top: 1px solid #fff; font-weight: 700; }
.vtext :deep(.zh) { vertical-align: -3px; }
.vtab { width: 21px; height: 75px; flex-direction: column; gap: 4px; padding-top: 3px; border: 1px solid #707070; border-left: 0; background: linear-gradient(90deg, #eee 50%, #dedede); color: #111; font-weight: 700; margin-bottom: 2px; }
.vtab.short { height: 59px; background: linear-gradient(90deg, #d4d4d4 50%, #c0c0c0); color: #555; }
.vt { writing-mode: vertical-rl; text-orientation: sideways; }

.project { flex: none; width: 434px; display: flex; flex-direction: column; background: #efefef; }
.phead { flex: none; height: 24px; display: flex; align-items: center; padding: 0 4px 0 6px; gap: 3px; background: #b0b0b0; color: #fff; font-weight: 500; }
.tabband { flex: none; height: 28px; border-top: 3px solid #efefef; border-bottom: 1px solid #707070; background: #ccc; display: flex; align-items: flex-end; padding: 0 6px; }
.tab { height: 22px; border: 1px solid #707070; border-bottom: 0; padding: 0 12px; background: linear-gradient(#d8d8d8 50%, #c8c8c8); color: #555; font-weight: 700; }
.tab.on { color: #111; background: linear-gradient(#f2f2f2, #e9e9e9); margin-bottom: -1px; }
.project .tab { width: 63px; height: 23px; }
.ptools { flex: none; height: 27px; display: flex; align-items: center; padding: 0 7px; background: #e9e9e9; gap: 5px; }
.framed { width: 22px; height: 22px; justify-content: center; border: 1px solid #2e62c8; border-radius: 2px; background: #fff; }
.pband { flex: none; height: 21px; background: #c2c2c2; }
.treewrap { flex: none; display: flex; border-bottom: 3px solid #1b2032; }
.tree { flex: 1; margin: 0; padding: 0; list-style: none; }
.tree li { height: 19px; display: flex; border-bottom: 1px solid #fff; }
.tree li.hl { background: #e0e0e0; }
.tree li.sel { background: #d4d9dd; }
.node { flex: 1; display: flex; align-items: center; border-right: 1px solid #c4c4c4; }
.node :deep(.txt) { line-height: 16px; padding-top: 2px; }
.sel .node { outline: 1px dashed #777; outline-offset: -1px; }
.side { width: 19px; }
.node.l1 { padding-left: 18px; }
.node.l2 { padding-left: 36px; }
.node.l3 { padding-left: 54px; }
.node .ico { margin-right: 4px; }
.arrow { width: 19px; display: flex; justify-content: center; }
.arrow.open::before { content: ""; border: 4px solid transparent; border-top: 5px solid #111; border-bottom: 0; }
.arrow.shut::before { content: ""; border: 4px solid transparent; border-left: 5px solid #111; border-right: 0; }
.bold { font-size: 13px; font-weight: 700; }
.vscroll { width: 18px; background: #c2c2c2; display: flex; flex-direction: column; }
.sbtn { width: 18px; height: 18px; justify-content: center; background: linear-gradient(#f0f0f0, #dcdcdc); border: 1px solid #888; box-shadow: inset 0 0 0 1px #fff; }
.sbtn svg { width: 12px; height: 12px; }
.vthumb { height: 247px; margin-top: 1px; border: 1px solid #888; box-shadow: inset 0 0 0 1px #fff; background: linear-gradient(90deg, #ececec, #d2d2d2); display: flex; align-items: center; justify-content: center; }
.grip { width: 8px; height: 8px; background: repeating-linear-gradient(#555 0 1px, transparent 1px 2px); }
.grip.v { background: repeating-linear-gradient(90deg, #555 0 1px, transparent 1px 2px); height: 9px; }
.dhead { flex: none; height: 21px; display: flex; background: linear-gradient(#f0f0f0, #d8d8d8); border-bottom: 1px solid #707070; }
.dhead button { width: 21px; justify-content: center; border-right: 1px solid #707070; }
.dhead svg { width: 12px; height: 12px; }
.dhead h2 { padding-left: 5px; line-height: 21px; font-weight: 700; }
.dband { flex: none; height: 25px; background: #ccc; border-bottom: 1px solid #707070; }
.dtools { flex: none; height: 27px; background: #e9e9e9; }
.dgrid { flex: 1; min-height: 0; overflow: hidden; }

table { width: 100%; table-layout: fixed; border-collapse: separate; border-spacing: 0; }
th { --zh: 13px; height: 20px; padding: 0 0 1px 3px; font-size: 11px; font-weight: 400; line-height: 16px; text-align: left; white-space: nowrap; overflow: hidden; border-top: 1px solid #aaa; border-right: 1px solid #aaa; border-bottom: 2px solid #f6f6f6; background: linear-gradient(#f0f0f0 0, #dedede 50%, #cdcdcd 50%, #dcdcdc 94%, #a2a2a2 94%); }
th.hot { background: linear-gradient(#f0f3f7 0, #dfe5ec 50%, #d0d8e0 50%, #dde3ea 94%, #a2a2a2 94%); }
th:last-child { border-right: 0; }
td { height: 19px; padding: 2px 0 0 4px; line-height: 16px; vertical-align: top; border-right: 1px solid #fff; border-bottom: 1px solid #fff; background: #efefef; white-space: nowrap; }
td.has { padding-top: 0; }
.dgrid td { border-right: 0; }
.dgrid .sel td { background: #d0d6da; }
.dgrid .sel td:last-child { background: #efefef; }
.dgrid .sel .dn { outline: 1px dashed #777; outline-offset: -1px; }
td.ic { padding: 1px 1px 0; }
.cell { position: relative; height: 18px; padding-top: 2px; }
.cbtn { position: absolute; right: 0; top: 0; width: 18px; height: 18px; justify-content: center; border: 1px solid #777; background: linear-gradient(#eee, #c8c8c8); color: #222; }
.dots { line-height: 12px; }
.cbtn.pale { background: #ececec; border-color: #999; color: #777; }
.down, .up { border: 4px solid transparent; border-top: 5px solid #555; border-bottom: 0; }
.up { border-top: 0; border-bottom: 4px solid #111; }

.editor { flex: 1; min-width: 0; display: flex; flex-direction: column; border-left: 3px solid #1b2032; border-right: 1px solid #1b2032; background: #b0b0b0; }
.path { flex: none; height: 24px; display: flex; align-items: center; padding: 0 4px 0 5px; background: #2d344e; color: #fff; font-size: 14px; font-weight: 600; }
.path a { font-weight: 600; line-height: 20px; padding-top: 2px; }
.path :deep(.zh) { font-weight: 500; }
.path .ico { width: 15px; height: 15px; margin-left: 3px; }
.chev { margin: 0 8px 0 11px; border: 4px solid transparent; border-left: 5px solid #fff; border-right: 0; }
.etools { flex: none; height: 27px; display: flex; align-items: center; padding: 0 12px 0 3px; background: #e9e9e9; }
.etools button { width: 24px; justify-content: center; }
.etools .sep { margin: 0 2px; }
.gtitle { flex: none; height: 21px; padding-left: 25px; background: #d8d8d8; font-size: 14px; font-weight: 600; line-height: 21px; }
.maingrid { flex: 1; min-height: 0; overflow: hidden; }
.maingrid .gut, .agrid .gut { background: #ccc; border-right-color: #b4b4b4; }
.maingrid td.type { border-left: 1px solid #c4c4c4; padding-left: 3px; }
.maingrid .name { padding-left: 23px; }
.sort { display: inline-block; margin-left: 10px; border: 4px solid transparent; border-bottom: 4px solid #111; border-top: 0; }
.dim { color: #8a8a8a; }
.maingrid .sel .gut { background: #c3ced9; }
.maingrid .sel .type { position: relative; background: #fff; outline: 1px solid #2e62c8; outline-offset: 0; border-color: #fff; }
.maingrid .sel .type::after { content: ""; position: absolute; right: -3px; bottom: -3px; width: 4px; height: 4px; background: #2e62c8; }
.maingrid .shade { background: #e0e0e0; }
.chk input { appearance: none; display: block; width: 15px; height: 15px; margin: 1px 0 0 13px; border: 1px solid #aaa; border-radius: 3px; background: linear-gradient(#f6f6f6, #e6e6e6); }
.hscroll { flex: none; height: 18px; display: flex; border-top: 1px solid #888; background: #c2c2c2; }
.hgut { width: 24px; background: #ccc; }
.hthumb { flex: 1; margin-left: 2px; border: 1px solid #888; border-top: 0; box-shadow: inset 0 0 0 1px #fff; background: linear-gradient(#e6e6e6, #d4d4d4); display: flex; align-items: center; justify-content: center; }
.htrack { width: 102px; }
.hscroll .sbtn { height: 17px; }
.hsplit { flex: none; height: 9px; display: flex; justify-content: center; gap: 10px; background: #d4d2d4; border-top: 1px solid #888; border-bottom: 2px solid #eee; }
.hsplit button { width: 24px; height: 6px; justify-content: center; background: #bbb; border: 1px solid #888; border-top: 0; }
.hsplit .up, .hsplit .down { border-width: 0 3px 3px; border-color: transparent transparent #111; border-style: solid; }
.hsplit .down { border-width: 3px 3px 0; border-color: #111 transparent transparent; }
.atabs { flex: none; height: 24px; display: flex; align-items: flex-end; gap: 2px; padding-left: 6px; background: #ccc; border-bottom: 1px solid #707070; }
.atabs .tab { width: 110px; height: 21px; justify-content: center; font-weight: 500; }
.atabs .tab:last-child { width: 95px; }
.atabs .tab.on { height: 22px; font-weight: 700; }
.agap { flex: none; height: 8px; background: #e9e9e9; }
.agrid { flex: none; height: 34px; overflow: hidden; border-bottom: 3px solid #1b2032; }
.inspector { flex: none; height: 25px; display: flex; align-items: flex-end; justify-content: flex-end; gap: 2px; border-bottom: 1px solid #f4f4f4; }
.itab { width: 75px; height: 21px; gap: 5px; padding: 0 3px; border: 1px solid #707070; border-bottom: 0; background: linear-gradient(#d8d8d8 50%, #c4c4c4); color: #555; font-weight: 500; }
.itab.on { background: #ececec; color: #111; font-weight: 700; border-color: #eee; }
.itab:nth-child(2) { width: 81px; }
.ictl { display: flex; gap: 5px; padding: 0 3px 6px 16px; }
.ictl .ico { width: 14px; height: 14px; }

.status { position: relative; flex: none; height: 29px; display: flex; align-items: center; background: #1c1c1c; color: #fff; }
.portalbtn { width: 181px; padding-left: 31px; gap: 6px; font-size: 13px; font-weight: 700; }
.edtabs { flex: 1; display: flex; gap: 3px; --zh: 13px; }
.edtabs button { width: 113px; height: 20px; gap: 4px; padding-left: 3px; background: #c4c4c4; color: #111; line-height: 16px; }
.edtabs .on { background: #fff; }
.msg { width: 338px; display: flex; align-items: center; gap: 4px; --zh: 13px; }
.box { width: 20px; height: 20px; background: #ccc; display: flex; align-items: center; justify-content: center; }
.bar { width: 1px; height: 28px; margin: 0 1px; background: #555; }
.ime { position: absolute; right: 48px; top: -9px; width: 192px; height: 30px; display: flex; align-items: center; justify-content: space-between; padding: 0 6px 0 3px; background: #fafafa; border: 1px solid #c4ccd4; border-radius: 2px; color: #1567c8; }
.ime b { font: 700 15px/18px "Noto Sans CJK SC", sans-serif; }
.ime .big { width: 32px; height: 32px; }
.imesep { width: 3px; height: 28px; border-left: 1px solid #f4c8b8; border-right: 1px solid #f4c8b8; }

.taskbar { position: relative; flex: none; height: 48px; display: flex; align-items: center; color: #fff; background: linear-gradient(rgba(150, 160, 170, .9) 0, rgba(110, 135, 165, .6) 6px, transparent 10px), linear-gradient(90deg, #1c5c94 0, #2a80bc 100px, #3199d4 300px, #6ab8e0 450px, #3f9fd6 620px, #2f90cc 850px, #2676bf 1150px, #1f66b2 1450px, #1d5fa8 1540px, #164680 1580px, #143f78 100%); }
.aero { position: absolute; left: 0; top: 0; width: 100%; height: 100%; }
.orb { position: relative; width: 70px; height: 48px; padding-left: 11px; }
.orb svg { width: 44px; height: 44px; }
.app { position: relative; width: 70px; height: 46px; justify-content: center; }
.app.media { width: 66px; }
.app svg { width: 40px; height: 40px; }
.app.run { width: 67px; margin-left: 4px; border: 1px solid #1f4a70; border-radius: 3px; background: linear-gradient(rgba(255, 255, 255, .45), rgba(255, 255, 255, .2)); box-shadow: inset 0 0 0 1px rgba(255, 255, 255, .6); }
.app.tiabtn { background: linear-gradient(rgba(255, 255, 255, .75), rgba(255, 255, 255, .5)); }
.tiabox { width: 40px; height: 40px; background: #2a2d3e; display: flex; flex-direction: column; align-items: center; font-size: 20px; line-height: 20px; }
.tiabox b:first-child { font-weight: 500; }
.lang { position: relative; margin-left: auto; display: flex; align-items: center; gap: 8px; padding-right: 14px; }
.tray { position: relative; display: flex; align-items: center; gap: 13px; }
.ch { font: 14px/20px "Liberation Serif", serif; }
.mid { width: 19px; height: 19px; }
.mini svg { display: block; width: 10px; height: 20px; }
.clock { position: relative; width: 106px; padding-left: 6px; font-size: 15px; line-height: 22px; text-align: center; }
.peek { position: relative; width: 14px; height: 47px; border: 1px solid #5d7ea8; background: linear-gradient(rgba(255, 255, 255, .4), rgba(255, 255, 255, .08)); }

.watermark { position: absolute; inset: 0; display: flex; align-items: center; justify-content: center; pointer-events: none; }
.wm { transform: rotate(-30deg); color: #f6f6f6; text-shadow: 0 0 2px rgba(0, 0, 0, .22), 0 0 2px rgba(0, 0, 0, .12); opacity: .85; white-space: nowrap; }
.wm1 { padding-left: 4px; font: 500 41px/42px "Noto Sans CJK SC", sans-serif; }
.wm2 { font: 27px/30px "Liberation Sans", sans-serif; }
</style>
